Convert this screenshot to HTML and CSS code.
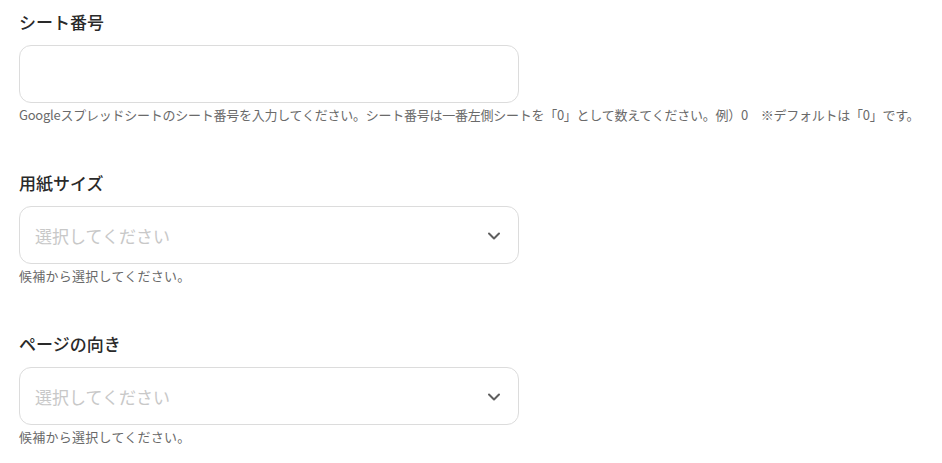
FILE: index.html
```html
<!DOCTYPE html>
<html lang="ja">
<head>
<meta charset="utf-8">
<link rel="stylesheet" href="styles.css">
</head>
<body>
<div class="form">
  <div class="field">
    <label class="label">シート番号</label>
    <div class="input"></div>
    <p class="help help-long">Googleスプレッドシートのシート番号を入力してください。シート番号は一番左側シートを「0」として数えてください。例）0　※デフォルトは「0」です。</p>
  </div>
  <div class="field">
    <label class="label">用紙サイズ</label>
    <div class="select">
      <span class="placeholder">選択してください</span>
      <svg class="chevron" width="14" height="10" viewBox="0 0 14 10"><path d="M2 2.5 L7 7.5 L12 2.5" fill="none" stroke="#5f5f5f" stroke-width="2" stroke-linecap="round" stroke-linejoin="round"/></svg>
    </div>
    <p class="help">候補から選択してください。</p>
  </div>
  <div class="field">
    <label class="label">ページの向き</label>
    <div class="select">
      <span class="placeholder">選択してください</span>
      <svg class="chevron" width="14" height="10" viewBox="0 0 14 10"><path d="M2 2.5 L7 7.5 L12 2.5" fill="none" stroke="#5f5f5f" stroke-width="2" stroke-linecap="round" stroke-linejoin="round"/></svg>
    </div>
    <p class="help">候補から選択してください。</p>
  </div>
</div>
</body>
</html>
```
FILE: styles.css
```css
* { box-sizing: border-box; }
html, body { margin: 0; padding: 0; background: #fff; }
body {
  font-family: "Noto Sans CJK JP", "Noto Sans", sans-serif;
  color: #222;
}
.form {
  padding: 10px 0 0 19px;
  display: flex;
  flex-direction: column;
  gap: 46px;
}
.field {
  display: flex;
  flex-direction: column;
}
.label {
  font-size: 17px;
  line-height: 24px;
  font-weight: 500;
  color: #2a2a2a;
  margin-bottom: 11px;
}
.input, .select {
  width: 500px;
  height: 58px;
  border: 1px solid #dcdcdc;
  border-radius: 12px;
  background: #fff;
}
.select {
  display: flex;
  align-items: center;
  justify-content: space-between;
  padding: 0 17px 0 15px;
}
.placeholder {
  font-size: 17px;
  color: #c8c8c8;
}
.chevron { display: block; margin-top: 2px; }
.help {
  margin: 2px 0 0;
  font-size: 13px;
  line-height: 20px;
  color: #6a6a6a;
  white-space: nowrap;
  letter-spacing: 0.02em;
}
.help-long { letter-spacing: -0.25px; }
```
